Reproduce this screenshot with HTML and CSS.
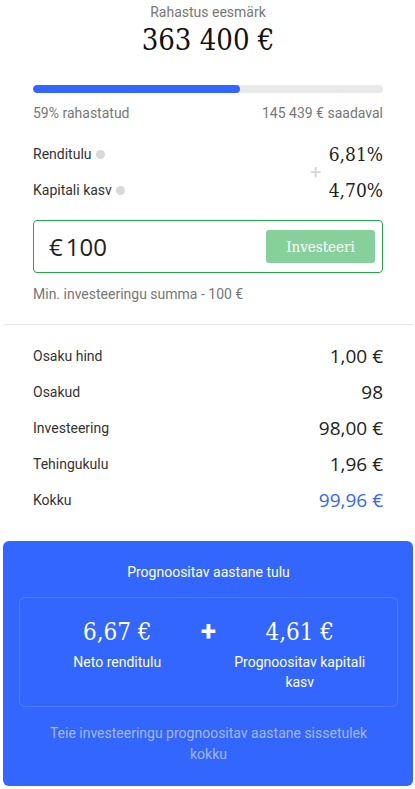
FILE: index.html
```html
<!DOCTYPE html>
<html lang="et">
<head>
<meta charset="utf-8">
<title>Rahastus</title>
<link rel="stylesheet" href="styles.css">
</head>
<body>
<div class="page">
  <section class="top">
    <div class="goal-label">Rahastus eesmärk</div>
    <div class="goal-amount">363 400 €</div>
    <div class="progress"><div class="progress-fill" style="width:59%"></div></div>
    <div class="progress-stats">
      <span>59% rahastatud</span>
      <span>145 439 € saadaval</span>
    </div>
    <div class="yields">
      <div class="yield-label">Renditulu <span class="dot"></span></div>
      <div class="yield-plus">+</div>
      <div class="yield-value">6,81%</div>
      <div class="yield-label">Kapitali kasv <span class="dot"></span></div>
      <div class="yield-value">4,70%</div>
    </div>
    <div class="invest-box">
      <div class="invest-amount">€<span class="invest-num">100</span></div>
      <button class="invest-btn">Investeeri</button>
    </div>
    <div class="min-note">Min. investeeringu summa - 100 €</div>
  </section>
  <hr class="divider">
  <section class="summary">
    <div class="row"><span class="row-label">Osaku hind</span><span class="row-value">1,00 €</span></div>
    <div class="row"><span class="row-label">Osakud</span><span class="row-value">98</span></div>
    <div class="row"><span class="row-label">Investeering</span><span class="row-value">98,00 €</span></div>
    <div class="row"><span class="row-label">Tehingukulu</span><span class="row-value">1,96 €</span></div>
    <div class="row"><span class="row-label">Kokku</span><span class="row-value total">99,96 €</span></div>
  </section>
  <section class="forecast">
    <div class="forecast-title">Prognoositav aastane tulu</div>
    <div class="forecast-box">
      <div class="fc-col">
        <div class="fc-value">6,67 €</div>
        <div class="fc-label">Neto renditulu</div>
      </div>
      <div class="fc-plus">+</div>
      <div class="fc-col">
        <div class="fc-value">4,61 €</div>
        <div class="fc-label">Prognoositav kapitali kasv</div>
      </div>
    </div>
    <div class="forecast-note">Teie investeeringu prognoositav aastane sissetulek kokku</div>
  </section>
</div>
</body>
</html>
```
FILE: styles.css
```css
* { box-sizing: border-box; }
body {
  margin: 0;
  background: #fff;
  font-family: Roboto, "Noto Sans", sans-serif;
  color: #333;
}
.page {
  width: 415px;
  padding: 0 2px 0 3px;
}
.top {
  padding: 2px 30px 0 30px;
}
.goal-label {
  text-align: center;
  font-size: 14px;
  line-height: 20px;
  color: #777;
}
.goal-amount {
  text-align: center;
  font-family: "DejaVu Serif Condensed", "DejaVu Serif", serif;
  font-size: 29px;
  line-height: 36px;
  color: #111;
}
.progress {
  margin-top: 27px;
  height: 8px;
  border-radius: 4px;
  background: #e9e9e9;
  overflow: hidden;
}
.progress-fill {
  height: 100%;
  background: #3366ff;
  border-radius: 4px;
}
.progress-stats {
  margin-top: 10px;
  display: flex;
  justify-content: space-between;
  font-size: 14px;
  line-height: 20px;
  color: #777;
}
.yields {
  margin-top: 13px;
  display: grid;
  grid-template-columns: 1fr 26px auto;
  grid-template-rows: 36px 36px;
  align-items: center;
}
.yield-label {
  font-size: 14px;
  color: #333;
  display: flex;
  align-items: center;
  gap: 4px;
}
.dot {
  width: 9px;
  height: 9px;
  border-radius: 50%;
  background: #d8d8d8;
}
.yield-plus {
  grid-column: 2;
  grid-row: 1 / span 2;
  text-align: center;
  font-size: 20px;
  color: #d6d6d6;
  line-height: 20px;
}
.yield-value {
  grid-column: 3;
  justify-self: end;
  font-family: "DejaVu Serif Condensed", "DejaVu Serif", serif;
  font-size: 19px;
  color: #222;
}
.invest-box {
  margin-top: 12px;
  height: 53px;
  border: 1px solid #22a843;
  border-radius: 4px;
  display: flex;
  align-items: center;
  justify-content: space-between;
  padding: 0 7px 0 15px;
}
.invest-amount {
  font-family: "Open Sans", sans-serif;
  font-size: 24px;
  color: #222;
}
.invest-num { margin-left: 3px; }
.invest-btn {
  width: 109px;
  height: 33px;
  border: 0;
  border-radius: 3px;
  background: #86d09c;
  color: #fff;
  font-family: "DejaVu Serif Condensed", "DejaVu Serif", serif;
  font-size: 15px;
}
.min-note {
  margin-top: 11px;
  font-size: 14px;
  line-height: 20px;
  color: #777;
}
.divider {
  margin: 20px 0 0 1px;
  border: 0;
  height: 1px;
  background: #e6e6e6;
}
.summary {
  margin-top: 13px;
  padding: 0 30px;
}
.row {
  height: 36px;
  display: flex;
  justify-content: space-between;
  align-items: center;
}
.row-label {
  font-size: 14px;
  color: #333;
}
.row-value {
  font-family: "Open Sans", sans-serif;
  font-size: 19px;
  color: #222;
}
.row-value.total { color: #3366ff; }
.forecast {
  margin-top: 23px;
  height: 245px;
  background: #3366ff;
  border-radius: 6px;
  padding: 21px 15px 0 16px;
  color: #fff;
}
.forecast-title {
  text-align: center;
  font-size: 14px;
  line-height: 20px;
}
.forecast-box {
  margin-top: 15px;
  height: 110px;
  border: 1px solid rgba(255,255,255,0.14);
  border-radius: 6px;
  padding: 19px 26px 0;
  display: grid;
  grid-template-columns: 1fr 40px 1fr;
}
.fc-col { text-align: center; }
.fc-value {
  font-family: "DejaVu Serif Condensed", "DejaVu Serif", serif;
  font-size: 24px;
  line-height: 30px;
}
.fc-label {
  margin-top: 5px;
  font-size: 14px;
  line-height: 20px;
}
.fc-plus {
  text-align: center;
  font-size: 28px;
  font-weight: 700;
  line-height: 30px;
}
.forecast-note {
  margin-top: 16px;
  padding: 0 14px;
  text-align: center;
  font-size: 14px;
  line-height: 21px;
  color: #a3b8ff;
}
```
